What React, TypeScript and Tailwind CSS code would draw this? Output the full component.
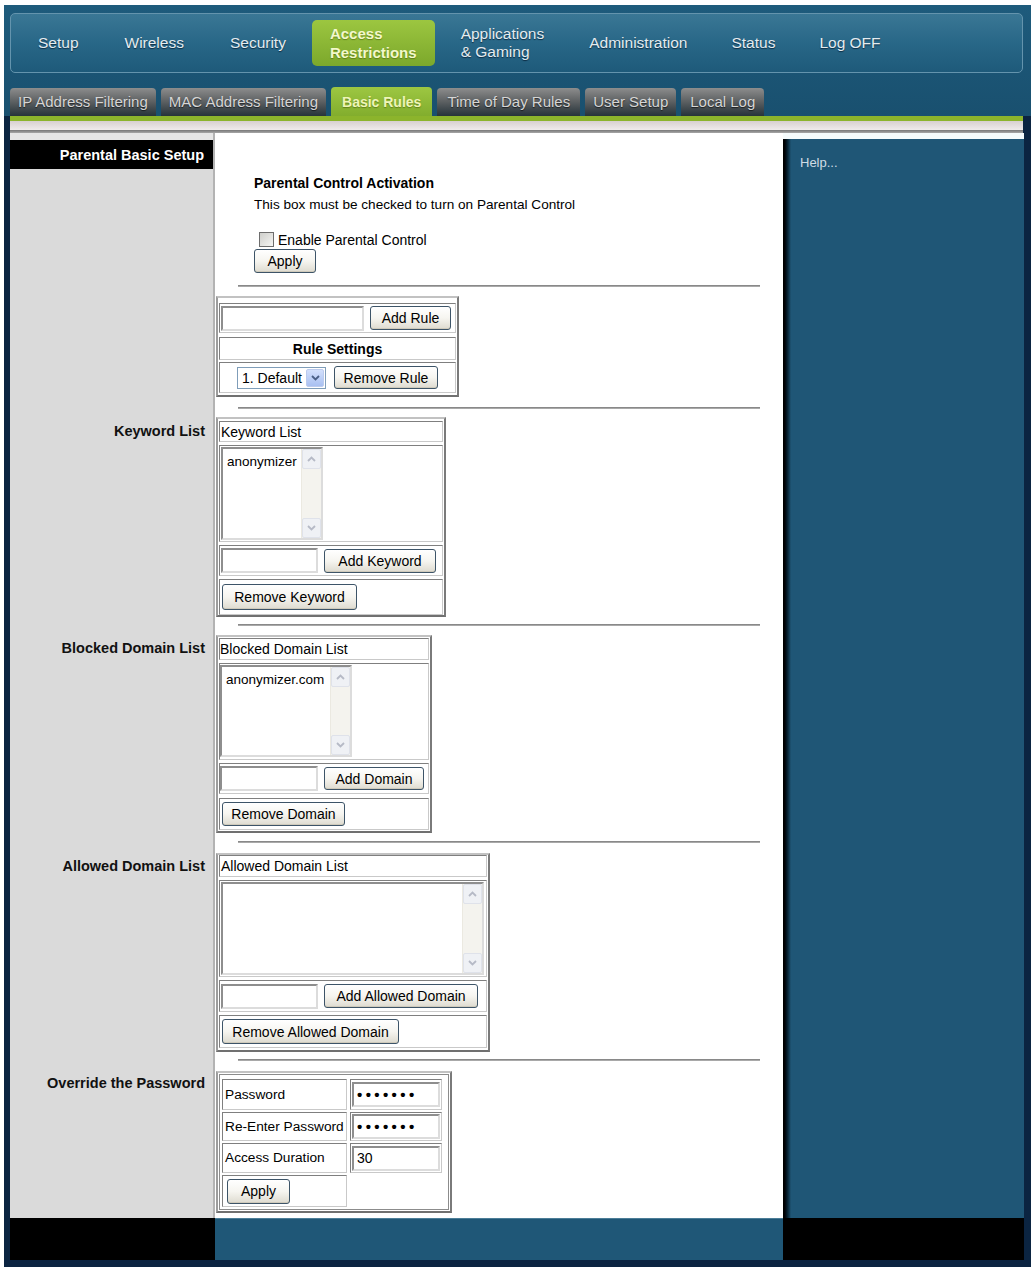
import React from "react";

type Kids = { children?: React.ReactNode; className?: string };

const Chevron = ({ up, className }: { up?: boolean; className?: string }) => (
  <svg width="9" height="6" viewBox="0 0 9 6" className={className}>
    <path
      d={up ? "M1 5 L4.5 1.5 L8 5" : "M1 1 L4.5 4.5 L8 1"}
      fill="none"
      stroke="currentColor"
      strokeWidth="1.8"
    />
  </svg>
);

const Btn = ({ children, className = "" }: Kids) => (
  <button
    type="button"
    className={`shrink-0 whitespace-nowrap rounded-[3px] border border-[#3d5468] bg-linear-to-b from-white via-[#f6f5f0] to-[#dedbd0] text-[14px] leading-none text-black shadow-[inset_0_-1px_0_#cfcabb] ${className}`}
  >
    {children}
  </button>
);

const TextBox = ({ children, className = "" }: Kids) => (
  <div
    className={`shrink-0 bg-white border-2 border-t-[#8e8e8e] border-l-[#8e8e8e] border-b-[#dcdcdc] border-r-[#dcdcdc] flex items-center ${className}`}
  >
    {children}
  </div>
);

const Cell = ({ children, className = "" }: Kids) => (
  <div
    className={`whitespace-nowrap border border-t-[#7f7f7f] border-l-[#7f7f7f] border-b-[#c9c9c9] border-r-[#c9c9c9] ${className}`}
  >
    {children}
  </div>
);

const Outer = ({ children, className = "" }: Kids) => (
  <div
    className={`ml-[1px] border-2 border-t-[#c2c2c2] border-l-[#9c9c9c] border-b-[#707070] border-r-[#7a7a7a] bg-white ${className}`}
  >
    {children}
  </div>
);

const ScrollBar = () => (
  <div className="w-[20px] h-full shrink-0 flex flex-col bg-[#f4f3ee] border-l border-[#ebe9e1]">
    <div className="h-[20px] rounded-[2px] border border-[#dfe2ea] bg-[#eff1f5] flex items-center justify-center text-[#b6bac6]">
      <Chevron up />
    </div>
    <div className="flex-1" />
    <div className="h-[20px] rounded-[2px] border border-[#dfe2ea] bg-[#eff1f5] flex items-center justify-center text-[#b6bac6]">
      <Chevron />
    </div>
  </div>
);

const ListBox = ({ item, className = "" }: { item?: string; className?: string }) => (
  <div
    className={`bg-white border-2 border-t-[#8e8e8e] border-l-[#8e8e8e] border-b-[#dcdcdc] border-r-[#dcdcdc] flex ${className}`}
  >
    <div className="flex-1 pl-[4px] pt-[5px] text-[13.5px]">{item}</div>
    <ScrollBar />
  </div>
);

const Row = ({ left, children }: { left?: React.ReactNode; children?: React.ReactNode }) => (
  <div className="flex">
    <div className="w-[205px] shrink-0 bg-[#dadada] border-r-2 border-r-[#b3b3b3]">{left}</div>
    <div className="w-[568px] shrink-0 bg-white">{children}</div>
  </div>
);

const Label = ({ children, className = "" }: Kids) => (
  <div className={`pr-[8px] text-right font-bold text-[14.5px] text-[#111] ${className}`}>{children}</div>
);

const Rule = ({ className = "" }: { className?: string }) => (
  <Row>
    <div className={`px-[23px] ${className}`}>
      <div className="h-[2px] bg-linear-to-b from-[#7a7a7a] to-[#b9b9b9]" />
    </div>
  </Row>
);

const navItems = ["Setup", "Wireless", "Security"];
const navItems2 = ["Administration", "Status", "Log OFF"];
const tabs = [
  { t: "IP Address Filtering", pad: "px-[8px]" },
  { t: "MAC Address Filtering", pad: "px-[8px]" },
  { t: "Basic Rules", pad: "px-[11px]", active: true },
  { t: "Time of Day Rules", pad: "px-[10px]" },
  { t: "User Setup", pad: "px-[8px]" },
  { t: "Local Log", pad: "px-[9px]" },
];

const Header = () => (
  <div className="h-[111px] bg-linear-to-b from-[#1e5b7c] to-[#19506f] pl-[6px] pr-[8px] pt-[8px]">
    <nav className="h-[60px] rounded-[5px] border border-[#6494ad] bg-linear-to-b from-[#3a7795] via-[#286787] to-[#1e5a7a] flex items-center pl-[4px] text-[15.5px] leading-[18px] text-[#e4ecf0] [text-shadow:0_1px_1px_rgba(0,20,40,0.7)]">
      {navItems.map((n) => (
        <span key={n} className="px-[23px]">{n}</span>
      ))}
      <div className="mx-[3px] px-[18px] h-[46px] rounded-[5px] bg-linear-to-b from-[#9cc640] to-[#7ca82b] flex flex-col justify-center font-bold text-[15px] leading-[19px] text-[#f3f8cb] [text-shadow:0_1px_1px_rgba(60,80,0,0.5)]">
        <span>Access</span>
        <span>Restrictions</span>
      </div>
      <div className="px-[23px] flex flex-col">
        <span>Applications</span>
        <span>&amp; Gaming</span>
      </div>
      {navItems2.map((n) => (
        <span key={n} className="px-[22px]">{n}</span>
      ))}
    </nav>
    <div className="mt-[14px] h-[29px] flex items-end gap-[5px]">
      {tabs.map(({ t, pad, active }) =>
        active ? (
          <div
            key={t}
            className={`h-[29px] ${pad} rounded-t-[4px] bg-linear-to-b from-[#9dc742] to-[#82ad2d] flex items-center font-bold text-[14px] text-[#eef5b8] [text-shadow:0_1px_1px_rgba(60,80,0,0.5)]`}
          >
            {t}
          </div>
        ) : (
          <div
            key={t}
            className={`h-[28px] ${pad} rounded-t-[4px] bg-linear-to-b from-[#8d8d8d] via-[#5b5f61] to-[#26333a] flex items-center text-[15px] text-[#d6d6d6] [text-shadow:0_1px_1px_rgba(0,0,0,0.6)]`}
          >
            {t}
          </div>
        )
      )}
    </div>
  </div>
);

export default function App() {
  return (
    <div className="min-h-screen bg-white pt-[5px] pl-[4px] [font-family:'Liberation_Sans',Arial,sans-serif] text-[14px] leading-[16px] text-black">
      <div className="w-[1027px] bg-[#0b2441] pb-[7px]">
        <Header />
        <div className="pl-[6px] pr-[8px]">
          <div className="h-[5px] bg-[#8cb42c]" />
          <div className="h-[9px] bg-linear-to-b from-[#d8d0d0] to-[#efebeb]" />
          <div className="h-[3px] bg-linear-to-b from-[#777] to-[#a8a8a8]" />
        </div>

        <div className="flex pl-[6px] pr-[7px]">
          <div className="w-[773px] flex flex-col">
            {/* activation */}
            <Row
              left={
                <div>
                  <div className="h-[7px] bg-[#e6e6e6]" />
                  <div className="h-[29px] bg-black pr-[9px] flex items-center justify-end font-bold text-[14.5px] text-white">
                    Parental Basic Setup
                  </div>
                </div>
              }
            >
              <div className="pt-[42px] pl-[39px]">
                <div className="font-bold">Parental Control Activation</div>
                <div className="mt-[6px] text-[13.6px]">This box must be checked to turn on Parental Control</div>
                <div className="mt-[19px] h-[15px] flex items-center pl-[5px]">
                  <span className="w-[15px] h-[15px] border border-[#6d6d6d] bg-linear-to-br from-[#cfcfcb] to-[#f5f5f3]" />
                  <span className="ml-[4px]">Enable Parental Control</span>
                </div>
                <Btn className="mt-[2px] w-[62px] h-[24px]">Apply</Btn>
              </div>
            </Row>
            <Rule className="pt-[12px] pb-[9px]" />

            {/* rule table */}
            <Row>
              <Outer className="w-[243px] h-[101px] px-[1px] pt-[5px]">
                <Cell className="h-[30px] flex items-center pl-[1px]">
                  <TextBox className="w-[143px] h-[25px]" />
                  <Btn className="ml-[6px] w-[81px] h-[24px]">Add Rule</Btn>
                </Cell>
                <Cell className="mt-[4px] h-[23px] flex items-center justify-center font-bold">Rule Settings</Cell>
                <Cell className="mt-[2px] h-[31px] flex items-center justify-center gap-[8px]">
                  <div className="w-[89px] h-[22px] border border-[#7f9db9] bg-white flex items-center justify-between pl-[4px] pr-[1px]">
                    <span>1. Default</span>
                    <span className="w-[18px] h-[18px] rounded-[2px] border border-[#bccbee] bg-linear-to-b from-[#d3e0fc] to-[#a9c0f1] flex items-center justify-center text-[#4a5f86]">
                      <Chevron />
                    </span>
                  </div>
                  <Btn className="w-[104px] h-[23px]">Remove Rule</Btn>
                </Cell>
              </Outer>
            </Row>
            <Rule className="pt-[10px] pb-[8px]" />

            {/* keyword */}
            <Row left={<Label className="pt-[6px]">Keyword List</Label>}>
              <Outer className="w-[230px] h-[200px] px-[1px] pt-[2px]">
                <Cell className="h-[21px] flex items-center pl-[1px]">Keyword List</Cell>
                <Cell className="mt-[3px] h-[97px] pt-[1px] pl-[1px]">
                  <ListBox item="anonymizer" className="w-[102px] h-[93px]" />
                </Cell>
                <Cell className="mt-[3px] h-[31px] flex items-center pl-[1px]">
                  <TextBox className="w-[97px] h-[25px]" />
                  <Btn className="ml-[6px] w-[112px] h-[24px]">Add Keyword</Btn>
                </Cell>
                <Cell className="mt-[3px] h-[36px] flex items-center pl-[2px]">
                  <Btn className="w-[135px] h-[26px]">Remove Keyword</Btn>
                </Cell>
              </Outer>
            </Row>
            <Rule className="pt-[7px] pb-[9px]" />

            {/* blocked */}
            <Row left={<Label className="pt-[5px]">Blocked Domain List</Label>}>
              <Outer className="w-[216px] h-[198px] px-[1px] pt-[1px]">
                <Cell className="h-[22px] flex items-center">Blocked Domain List</Cell>
                <Cell className="mt-[3px] h-[97px] pt-[1px]">
                  <ListBox item="anonymizer.com" className="w-[132px] h-[92px]" />
                </Cell>
                <Cell className="mt-[3px] h-[31px] flex items-center">
                  <TextBox className="w-[98px] h-[25px]" />
                  <Btn className="ml-[6px] w-[100px] h-[23px]">Add Domain</Btn>
                </Cell>
                <Cell className="mt-[4px] h-[32px] flex items-center pl-[2px]">
                  <Btn className="w-[123px] h-[24px]">Remove Domain</Btn>
                </Cell>
              </Outer>
            </Row>
            <Rule className="pt-[8px] pb-[10px]" />

            {/* allowed */}
            <Row left={<Label className="pt-[5px]">Allowed Domain List</Label>}>
              <Outer className="w-[274px] h-[199px] px-[1px]">
                <Cell className="h-[22px] flex items-center pl-[1px]">Allowed Domain List</Cell>
                <Cell className="mt-[3px] h-[97px] pt-[1px] pl-[1px]">
                  <ListBox className="w-[263px] h-[93px]" />
                </Cell>
                <Cell className="mt-[3px] h-[32px] flex items-center pl-[1px]">
                  <TextBox className="w-[97px] h-[25px]" />
                  <Btn className="ml-[6px] w-[154px] h-[24px]">Add Allowed Domain</Btn>
                </Cell>
                <Cell className="mt-[3px] h-[33px] flex items-center pl-[2px]">
                  <Btn className="w-[177px] h-[25px]">Remove Allowed Domain</Btn>
                </Cell>
              </Outer>
            </Row>
            <Rule className="pt-[7px] pb-[10px]" />

            {/* password */}
            <Row left={<Label className="pt-[4px]">Override the Password</Label>}>
              <div className="pb-[5px]">
                <Outer className="w-[236px] h-[142px] p-[1px]">
                  <div className="h-full border border-[#8c8c8c] pl-[2px] pr-[4px] pt-[4px] pb-[2px] flex flex-col gap-[2px]">
                    {[
                      ["Password", "•••••••", "h-[31px]"],
                      ["Re-Enter Password", "•••••••", "h-[29px]"],
                      ["Access Duration", "30", "h-[30px]"],
                    ].map(([l, v, h]) => (
                      <div key={l} className={`flex gap-[3px] ${h}`}>
                        <Cell className="w-[125px] flex items-center pl-[2px] text-[13.7px] overflow-hidden">{l}</Cell>
                        <Cell className="w-[92px] flex items-center pl-[1px]">
                          <TextBox className={`w-[88px] h-[25px] pl-[3px] ${v === "30" ? "" : "font-bold tracking-[3.4px] text-[15px]"}`}>
                            {v}
                          </TextBox>
                        </Cell>
                      </div>
                    ))}
                    <div className="flex h-[32px]">
                      <Cell className="w-[125px] flex items-center pl-[4px]">
                        <Btn className="w-[63px] h-[25px]">Apply</Btn>
                      </Cell>
                    </div>
                  </div>
                </Outer>
              </div>
            </Row>
          </div>

          {/* help */}
          <div className="w-[241px] flex flex-col">
            <div className="h-[6px] bg-[#f5fbfc]" />
            <div className="flex-1 flex">
              <div className="w-[8px] bg-linear-to-r from-black to-[#1f5676]" />
              <div className="flex-1 bg-[#1f5676] pl-[9px] pt-[16px] text-[13px] leading-[15px] text-[#cfdce5]">Help...</div>
            </div>
          </div>
        </div>

        {/* footer */}
        <div className="flex pl-[6px] pr-[7px] h-[42px]">
          <div className="w-[205px] bg-black" />
          <div className="w-[568px] bg-[#1f5777] border-t border-[#4b7d97]" />
          <div className="w-[241px] bg-black" />
        </div>
      </div>
    </div>
  );
}
